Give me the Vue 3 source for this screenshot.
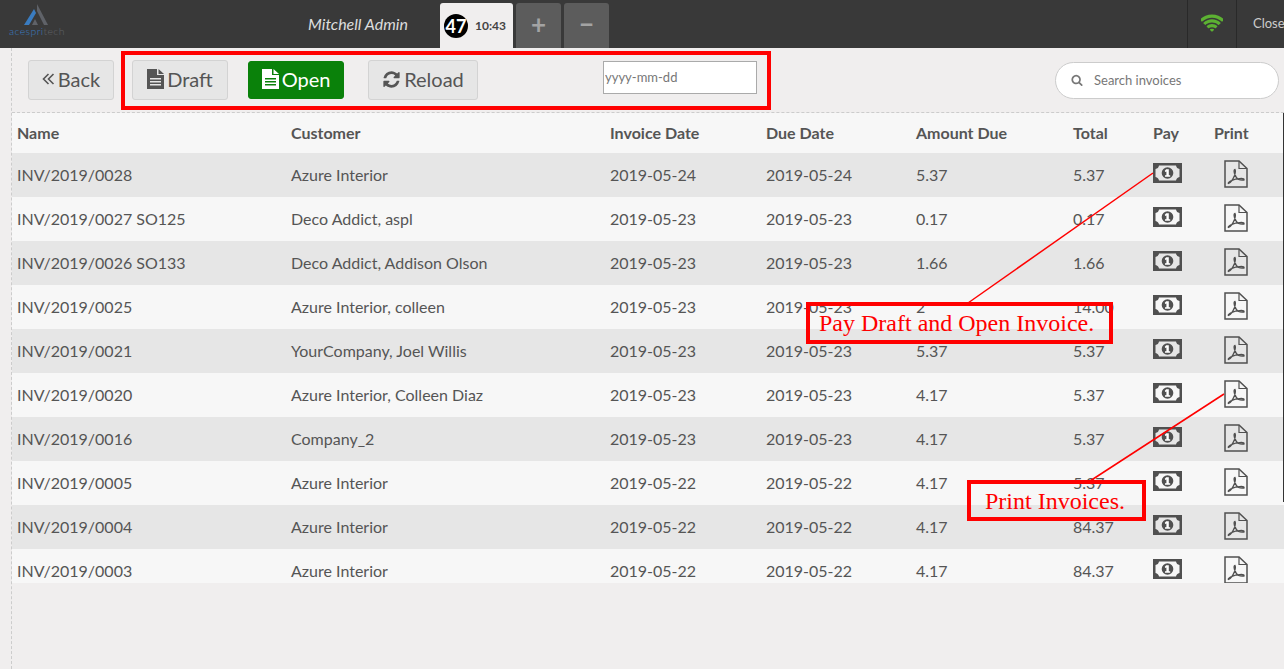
<script setup>
import { ref } from 'vue'

const columns = ['Name', 'Customer', 'Invoice Date', 'Due Date', 'Amount Due', 'Total', 'Pay', 'Print']

const invoices = ref([
    { name: 'INV/2019/0028', customer: 'Azure Interior', date: '2019-05-24', due: '2019-05-24', amount: '5.37', total: '5.37' },
    { name: 'INV/2019/0027 SO125', customer: 'Deco Addict, aspl', date: '2019-05-23', due: '2019-05-23', amount: '0.17', total: '0.17' },
    { name: 'INV/2019/0026 SO133', customer: 'Deco Addict, Addison Olson', date: '2019-05-23', due: '2019-05-23', amount: '1.66', total: '1.66' },
    { name: 'INV/2019/0025', customer: 'Azure Interior, colleen', date: '2019-05-23', due: '2019-05-23', amount: '2', total: '14.00' },
    { name: 'INV/2019/0021', customer: 'YourCompany, Joel Willis', date: '2019-05-23', due: '2019-05-23', amount: '5.37', total: '5.37' },
    { name: 'INV/2019/0020', customer: 'Azure Interior, Colleen Diaz', date: '2019-05-23', due: '2019-05-23', amount: '4.17', total: '5.37' },
    { name: 'INV/2019/0016', customer: 'Company_2', date: '2019-05-23', due: '2019-05-23', amount: '4.17', total: '5.37' },
    { name: 'INV/2019/0005', customer: 'Azure Interior', date: '2019-05-22', due: '2019-05-22', amount: '4.17', total: '5.37' },
    { name: 'INV/2019/0004', customer: 'Azure Interior', date: '2019-05-22', due: '2019-05-22', amount: '4.17', total: '84.37' },
    { name: 'INV/2019/0003', customer: 'Azure Interior', date: '2019-05-22', due: '2019-05-22', amount: '4.17', total: '84.37' },
])
</script>

<template>
    <div class="screen">
        <header class="topbar">
            <div class="logo">
                <svg class="logo-mark" width="26" height="22" viewBox="0 0 26 22">
                    <path d="M14 0 L25 21 L21 21 L14 7 Z" fill="#5f6268" />
                    <path d="M11 5 L13 9 L6 21 L1 21 Z" fill="#3a7cc0" />
                    <path d="M12 15 L15 21 L9 21 Z" fill="#5f6268" />
                </svg>
                <div class="logo-text"><span class="logo-blue">acespri</span><span class="logo-grey">tech</span></div>
            </div>
            <div class="cashier">Mitchell Admin</div>
            <div class="order-tab">
                <span class="order-badge">47</span>
                <span class="order-time">10:43</span>
            </div>
            <div class="order-btn">+</div>
            <div class="order-btn order-btn-minus">&minus;</div>
            <div class="topbar-right">
                <div class="status-cell">
                    <svg width="22" height="22" viewBox="0 0 1792 1792">
                        <path fill="#5cb132" d="M896 1523q-20 0-93-73.500t-73-93.500q0-32 62.500-54t103.500-22 103.500 22 62.500 54q0 20-73 93.500t-93 73.500zm270-271q-2 0-40-25t-101.500-50-128.500-25-128.500 25-101 50-40.500 25q-18 0-93.500-75t-75.500-93q0-13 10-23 78-77 196-121t233-44 233 44 196 121q10 10 10 23 0 18-75.500 93t-93.500 75zm273-272q-11 0-23-8-136-105-252-154.500t-268-49.500q-85 0-170.500 22t-149 53-113.500 62-79 53-31 22q-17 0-92-75t-75-93q0-12 10-22 132-132 320-205t380-73 380 73 320 205q10 10 10 22 0 18-75 93t-92 75zm271-271q-11 0-22-9-179-157-371.500-236.500t-420.500-79.500-420.500 79.500-371.500 236.500q-11 9-22 9-17 0-92.500-75t-75.500-93q0-13 10-23 187-186 445-288t527-102 527 102 445 288q10 10 10 23 0 18-75.500 93t-92.500 75z" />
                    </svg>
                </div>
                <div class="close-cell">Close</div>
            </div>
        </header>

        <main class="content">
            <div class="toolbar">
                <button class="btn btn-back">
                    <svg class="btn-icon" width="13" height="14" viewBox="0 0 13 14" fill="none" stroke="#555" stroke-width="1.6">
                        <path d="M6.500 2 L1.500 7 L6.500 12 M11.500 2 L6.500 7 L11.500 12" />
                    </svg>
                    Back
                </button>
                <button class="btn btn-draft">
                    <svg class="btn-icon" width="17" height="20" viewBox="0 0 17 20">
                        <path fill="#555" fill-rule="evenodd" d="M0 0 H10 V6 H17 V20 H0 Z M3 9 V10.500 H14 V9 Z M3 12 V13.500 H14 V12 Z M3 15 V16.500 H14 V15 Z" />
                        <path fill="#555" d="M11.500 0 L17 5 H11.500 Z" />
                    </svg>
                    Draft
                </button>
                <button class="btn btn-open">
                    <svg class="btn-icon" width="17" height="20" viewBox="0 0 17 20">
                        <path fill="#fff" fill-rule="evenodd" d="M0 0 H10 V6 H17 V20 H0 Z M3 9 V10.500 H14 V9 Z M3 12 V13.500 H14 V12 Z M3 15 V16.500 H14 V15 Z" />
                        <path fill="#fff" d="M11.500 0 L17 5 H11.500 Z" />
                    </svg>
                    Open
                </button>
                <button class="btn btn-reload">
                    <svg class="btn-icon" width="19" height="19" viewBox="0 0 1792 1792">
                        <path fill="#555" d="M1639 1056q0 5-1 7-64 268-268 434.500t-478 166.500q-146 0-282.500-55t-243.500-157l-129 129q-19 19-45 19t-45-19-19-45v-448q0-26 19-45t45-19h448q26 0 45 19t19 45-19 45l-137 137q71 66 161 102t187 36q134 0 250-65t186-179q11-17 53-117 8-23 30-23h192q13 0 22.500 9.500t9.500 22.500zm25-800v448q0 26-19 45t-45 19h-448q-26 0-45-19t-19-45 19-45l138-138q-148-137-349-137-134 0-250 65t-186 179q-11 17-53 117-8 23-30 23h-199q-13 0-22.500-9.500t-9.500-22.500v-7q65-268 270-434.500t480-166.500q146 0 284 55.500t245 156.500l130-129q19-19 45-19t45 19 19 45z" />
                    </svg>
                    Reload
                </button>
                <input class="date-input" type="text" placeholder="yyyy-mm-dd" />
                <div class="search-box">
                    <svg width="12" height="12" viewBox="0 0 1792 1792">
                        <path fill="#777" d="M1216 832q0-185-131.500-316.500t-316.500-131.500-316.500 131.500-131.500 316.500 131.500 316.500 316.500 131.500 316.500-131.500 131.500-316.500zm512 832q0 52-38 90t-90 38q-54 0-90-38l-343-342q-179 124-399 124-143 0-273.500-55.500t-225-150-150-225-55.500-273.500 55.500-273.500 150-225 225-150 273.500-55.500 273.500 55.500 225 150 150 225 55.500 273.500q0 220-124 399l343 343q37 37 37 90z" />
                    </svg>
                    <span>Search invoices</span>
                </div>
            </div>

            <div class="table-wrap">
                <table class="invoice-table">
                    <colgroup>
                        <col style="width: 274px" />
                        <col style="width: 319px" />
                        <col style="width: 156px" />
                        <col style="width: 150px" />
                        <col style="width: 157px" />
                        <col style="width: 80px" />
                        <col style="width: 61px" />
                        <col />
                    </colgroup>
                    <thead>
                        <tr>
                            <th v-for="col in columns" :key="col">{{ col }}</th>
                        </tr>
                    </thead>
                    <tbody>
                        <tr v-for="inv in invoices" :key="inv.name">
                            <td>{{ inv.name }}</td>
                            <td>{{ inv.customer }}</td>
                            <td>{{ inv.date }}</td>
                            <td>{{ inv.due }}</td>
                            <td>{{ inv.amount }}</td>
                            <td>{{ inv.total }}</td>
                            <td>
                                <svg class="money" width="29" height="20" viewBox="0 0 29 20">
                                    <path fill="#505050" fill-rule="evenodd" d="M0 0 H29 V20 H0 Z M6 2.500 Q5.500 5.500 2.500 6 V14 Q5.500 14.500 6 17.500 H23 Q23.500 14.500 26.500 14 V6 Q23.500 5.500 23 2.500 Z" />
                                    <circle cx="14.500" cy="10" r="5.800" fill="#505050" />
                                    <path fill="#fff" d="M13.200 6.200 H15.800 V12.300 H17.200 V13.800 H12 V12.300 H13.400 V8.400 L12.200 9.100 L11.800 7.700 Z" />
                                </svg>
                            </td>
                            <td>
                                <svg class="pdf" width="24" height="28" viewBox="0 0 24 28" fill="none" stroke="#505050">
                                    <path stroke-width="1.500" d="M1 1 H15 L23 8.500 V27 H1 Z" />
                                    <path stroke-width="1.200" d="M15 1 V8.500 H23" />
                                    <path stroke-width="1.300" d="M4.500 23.500 Q8 22 10.500 15.500 Q12 11 11 9.500 Q9.500 9.500 10.500 13.500 Q12 18 14.500 19.500 Q17 20.500 20 20 Q20.500 18.500 17.500 18.500 Q11 18.500 6.500 21 Q3.500 23 4.500 23.500 Z" />
                                </svg>
                            </td>
                        </tr>
                    </tbody>
                </table>
                <div class="scroll-thumb"></div>
            </div>

            <!-- red annotations pasted over the screenshot -->
            <svg class="arrows" width="1284" height="669" viewBox="0 0 1284 669">
                <line x1="968" y1="303" x2="1153" y2="173" stroke="#f00" stroke-width="1.500" />
                <line x1="1090" y1="481" x2="1224" y2="394" stroke="#f00" stroke-width="1.500" />
            </svg>
            <div class="note note-toolbar"></div>
            <div class="note note-pay">Pay Draft and Open Invoice.</div>
            <div class="note note-print">Print Invoices.</div>
        </main>
    </div>
</template>

<style>
html,
body {
    margin: 0;
    background: #f0eeee;
}
</style>

<style scoped>
.screen {
    width: 1284px;
    height: 669px;
    overflow: hidden;
    display: flex;
    flex-direction: column;
    font-family: Lato, sans-serif;
    color: #555;
    background: #f0eeee;
}

.topbar {
    height: 48px;
    flex: none;
    display: flex;
    align-items: flex-end;
    background: #393939;
}
.logo {
    width: 308px;
    height: 48px;
    flex: none;
    box-sizing: border-box;
    padding: 4px 0 0 9px;
    font-size: 10.500px;
    font-weight: 300;
    line-height: 11px;
    letter-spacing: 0.4px;
}
.logo-mark {
    display: block;
    margin-left: 14px;
}
.logo-blue {
    color: #3a7cc0;
}
.logo-grey {
    color: #5f6268;
}
.cashier {
    width: 132px;
    height: 48px;
    flex: none;
    line-height: 48px;
    font-size: 16px;
    font-style: italic;
    color: #ddd;
}
.order-tab {
    width: 73px;
    height: 45px;
    flex: none;
    display: flex;
    align-items: center;
    box-sizing: border-box;
    padding-left: 4px;
    gap: 7px;
    background: #f0eeee;
    border-radius: 3px 3px 0 0;
}
.order-badge {
    width: 24px;
    height: 24px;
    border-radius: 50%;
    background: #000;
    color: #fff;
    font-size: 18px;
    font-weight: 700;
    line-height: 24px;
    text-align: center;
}
.order-time {
    font-size: 12px;
    font-weight: 700;
    color: #444;
}
.order-btn {
    width: 45px;
    height: 45px;
    flex: none;
    margin-left: 3px;
    background: #5c5c5c;
    border-radius: 3px 3px 0 0;
    color: #a3a3a3;
    font-size: 26px;
    font-weight: 700;
    line-height: 43px;
    text-align: center;
}
.order-btn-minus {
    margin-left: 3px;
}
.topbar-right {
    margin-left: auto;
    height: 48px;
    display: flex;
}
.status-cell {
    width: 48px;
    border-left: 1px solid #292929;
    display: flex;
    align-items: center;
    justify-content: center;
}
.close-cell {
    width: 48px;
    border-left: 1px solid #292929;
    box-sizing: border-box;
    padding-left: 16px;
    font-size: 13px;
    line-height: 47px;
    color: #ccc;
    white-space: nowrap;
}

.content {
    position: relative;
    flex: 1;
    margin-left: 11px;
    border-left: 1px dashed #ccc;
}

.toolbar {
    height: 65px;
    box-sizing: border-box;
    border-bottom: 1px dashed #ccc;
    display: flex;
    align-items: center;
    padding-left: 16px;
}
.btn {
    height: 40px;
    box-sizing: border-box;
    display: flex;
    align-items: center;
    justify-content: center;
    gap: 3px;
    padding: 0 0 2px;
    border: 1px solid #d3d3d3;
    border-radius: 3px;
    background: #e6e6e6;
    color: #555;
    font-family: Lato, sans-serif;
    font-size: 20px;
}
.btn-back {
    width: 86px;
    margin-right: 18px;
}
.btn-draft {
    width: 96px;
    margin-right: 20px;
}
.btn-open {
    width: 96px;
    height: 38px;
    margin-right: 24px;
    background: #0a810a;
    border-color: #0a810a;
    color: #fff;
}
.btn-reload {
    width: 110px;
    margin-right: 125px;
}
.date-input {
    width: 154px;
    height: 33px;
    box-sizing: border-box;
    margin-top: -6px;
    padding: 0 1px;
    border: 1px solid #aaa;
    background: #fff;
    font-family: Lato, sans-serif;
    font-size: 13px;
}
.date-input::placeholder {
    color: #777;
    opacity: 1;
}
.search-box {
    width: 224px;
    height: 37px;
    box-sizing: border-box;
    margin-left: 298px;
    display: flex;
    align-items: center;
    gap: 11px;
    padding-left: 15px;
    background: #fff;
    border: 1px solid #ccc;
    border-radius: 20px;
    font-size: 13px;
    color: #777;
}

.table-wrap {
    position: relative;
    height: 470px;
    overflow: hidden;
}
.scroll-thumb {
    position: absolute;
    right: 0;
    top: 0;
    width: 1px;
    height: 389px;
    background: #333;
}
.invoice-table {
    width: 1272px;
    table-layout: fixed;
    border-collapse: collapse;
    font-size: 16px;
}
.invoice-table th {
    height: 40px;
    padding: 0 0 2px 5px;
    box-sizing: border-box;
    text-align: left;
    font-weight: 700;
    background: #f7f7f7;
}
.invoice-table td {
    height: 44px;
    padding: 0 0 2px 5px;
    box-sizing: border-box;
    background: #f7f7f7;
    white-space: nowrap;
}
.invoice-table tbody tr:nth-child(odd) td {
    background: #e6e6e6;
}
.money {
    display: block;
    margin: -2px 0 0 0;
}
.pdf {
    display: block;
    margin: -1px 0 0 10px;
}

.arrows {
    position: absolute;
    left: -12px;
    top: -48px;
    pointer-events: none;
}
.note {
    position: absolute;
    box-sizing: border-box;
    border: 4px solid #f00;
    color: #f00;
    font-family: 'Liberation Serif', serif;
    font-size: 24px;
    line-height: 34px;
}
.note-toolbar {
    left: 109px;
    top: 3px;
    width: 650px;
    height: 59px;
}
.note-pay {
    left: 794px;
    top: 254px;
    width: 307px;
    height: 42px;
    padding-left: 9px;
}
.note-print {
    left: 955px;
    top: 432px;
    width: 179px;
    height: 41px;
    padding-left: 14px;
}
</style>
